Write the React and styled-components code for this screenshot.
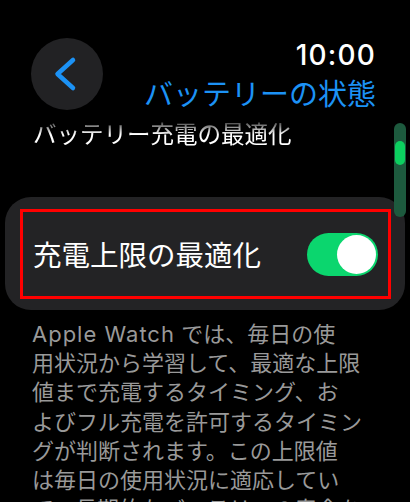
import React from "react";
import styled, { createGlobalStyle } from "styled-components";

const GlobalStyle = createGlobalStyle`
  html, body {
    margin: 0;
    padding: 0;
    background: #000000;
  }
  body {
    font-family: Inter, "Noto Sans CJK JP", sans-serif;
  }
`;

const Screen = styled.div`
  position: relative;
  width: 410px;
  height: 502px;
  overflow: hidden;
  background: #000000;
  color: #ffffff;
`;

const Header = styled.div`
  display: flex;
  justify-content: space-between;
  align-items: flex-start;
  padding: 38px 34px 0 31px;
`;

const BackButton = styled.button`
  width: 72px;
  height: 72px;
  padding: 0;
  border: none;
  border-radius: 50%;
  background: #222224;
  display: flex;
  align-items: center;
  justify-content: center;
  cursor: pointer;
`;

const TitleBlock = styled.div`
  display: flex;
  flex-direction: column;
  align-items: flex-end;
`;

const Time = styled.div`
  font-size: 28px;
  font-weight: 500;
  line-height: 34px;
  letter-spacing: 1.2px;
`;

const PageTitle = styled.div`
  margin-top: 3px;
  font-family: "Noto Sans CJK JP", sans-serif;
  font-size: 29px;
  line-height: 34px;
  color: #1c92f5;
`;

const SectionTitle = styled.div`
  margin: 9px 0 0 33px;
  font-family: "Noto Sans CJK JP", sans-serif;
  font-size: 23.5px;
  font-weight: 400;
  line-height: 28px;
  -webkit-mask-image: linear-gradient(to bottom, rgba(0, 0, 0, 0.25) 10%, #000 55%);
  mask-image: linear-gradient(to bottom, rgba(0, 0, 0, 0.25) 10%, #000 55%);
`;

const Card = styled.div`
  margin: 50px 5px 0;
  padding: 12px 14px 11px 15px;
  border-radius: 26px;
  background: #232325;
`;

const Row = styled.div`
  box-sizing: border-box;
  height: 90px;
  padding: 0 10px 0 10px;
  border: 3px solid #ff0000;
  display: flex;
  align-items: center;
  justify-content: space-between;
`;

const Label = styled.div`
  font-family: "Noto Sans CJK JP", sans-serif;
  font-size: 28.5px;
  line-height: 34px;
  color: #ffffff;
`;

const Toggle = styled.div`
  box-sizing: border-box;
  width: 71px;
  height: 43px;
  padding: 2px;
  border-radius: 22px;
  background: ${(p) => (p.$on ? "#0bd66e" : "#39393d")};
  display: flex;
  justify-content: ${(p) => (p.$on ? "flex-end" : "flex-start")};
`;

const Knob = styled.div`
  width: 39px;
  height: 39px;
  border-radius: 50%;
  background: #ffffff;
`;

const Description = styled.div`
  margin: 10px 0 0 32px;
  font-family: Inter, "Noto Sans CJK JP", sans-serif;
  font-size: 22px;
  line-height: 29.2px;
  color: #999999;
  white-space: nowrap;
`;

const Latin = styled.span`
  letter-spacing: 1px;
`;

const ScrollTrack = styled.div`
  position: absolute;
  left: 394px;
  top: 123px;
  width: 12px;
  height: 94px;
  border-radius: 6px;
  background: #1d5a3e;
`;

const ScrollThumb = styled.div`
  margin: 18px auto 0;
  width: 10px;
  height: 24px;
  border-radius: 5px;
  background: #0ccf5f;
`;

const lines = [
  "用状況から学習して、最適な上限",
  "値まで充電するタイミング、お",
  "よびフル充電を許可するタイミン",
  "グが判断されます。この上限値",
  "は毎日の使用状況に適応してい",
  "て、長期的なバッテリーの寿命を",
];

const App = () => {
  return (
    <Screen>
      <GlobalStyle />
      <Header>
        <BackButton aria-label="戻る">
          <svg width="72" height="72" viewBox="0 0 72 72">
            <path
              d="M42 22 L26.5 36 L42 50"
              fill="none"
              stroke="#1c92f5"
              strokeWidth="4.5"
              strokeLinecap="round"
              strokeLinejoin="round"
            />
          </svg>
        </BackButton>
        <TitleBlock>
          <Time>10:00</Time>
          <PageTitle>バッテリーの状態</PageTitle>
        </TitleBlock>
      </Header>
      <SectionTitle>バッテリー充電の最適化</SectionTitle>
      <Card>
        <Row>
          <Label>充電上限の最適化</Label>
          <Toggle $on>
            <Knob />
          </Toggle>
        </Row>
      </Card>
      <Description>
        <div>
          <Latin>Apple Watch</Latin> では、毎日の使
        </div>
        {lines.map((l) => (
          <div key={l}>{l}</div>
        ))}
      </Description>
      <ScrollTrack>
        <ScrollThumb />
      </ScrollTrack>
    </Screen>
  );
};

export default App;
